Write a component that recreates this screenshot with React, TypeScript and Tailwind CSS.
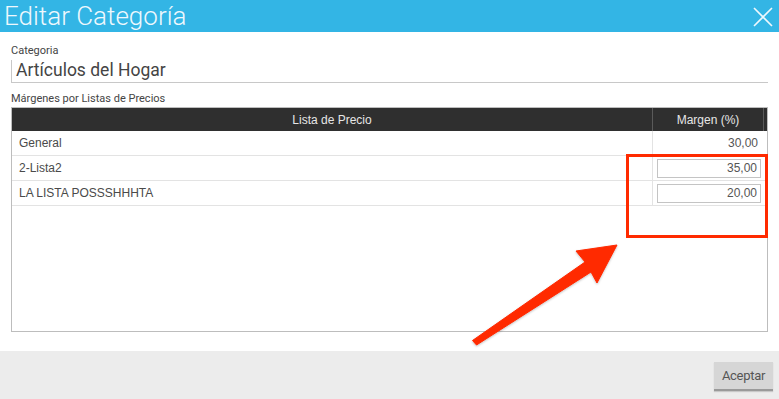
import React from "react";

const rows = [
  { name: "General", value: "30,00", editable: false },
  { name: "2-Lista2", value: "35,00", editable: true },
  { name: "LA LISTA POSSSHHHTA", value: "20,00", editable: true },
];

export default function App() {
  return (
    <div className="relative w-[779px] h-[399px] bg-white flex flex-col overflow-hidden" style={{ fontFamily: "Roboto, 'Liberation Sans', sans-serif" }}>
      <div className="h-[32px] bg-[#33b5e5] flex items-center justify-between pl-[4px] pr-[6px] shrink-0">
        <span className="text-[26px] font-light leading-none text-[#eef8fd]">Editar Categoría</span>
        <svg width="20" height="20" viewBox="0 0 20 20" className="mt-[1px]">
          <path d="M1 1 L19 19 M19 1 L1 19" stroke="#eef8fd" strokeWidth="1.6" fill="none" />
        </svg>
      </div>
      <div className="flex-1 flex flex-col px-[11px] pt-[12px]">
        <div className="text-[11px] leading-[13px] text-[#444]">Categoria</div>
        <div className="mt-[3px] h-[23px] border-l border-b border-[#c8c8c8] flex items-center pl-[4px] text-[17.5px] text-[#444] leading-none">
          Artículos del Hogar
        </div>
        <div className="mt-[9px] text-[11px] leading-[13px] text-[#444]">Márgenes por Listas de Precios</div>
        <div className="mt-[2px] h-[225px] border border-[#bdbdbd] flex flex-col" style={{ fontFamily: "'Liberation Sans', Arial, sans-serif" }}>
          <div className="h-[23px] bg-[#2f2f2f] flex text-[12px] text-[#e6e6e6] shrink-0">
            <div className="w-[641px] flex items-center justify-center border-r border-[#5a5a5a]">Lista de Precio</div>
            <div className="w-[111px] flex items-center justify-center border-r border-[#5a5a5a]">Margen (%)</div>
            <div className="flex-1" />
          </div>
          {rows.map((r) => (
            <div key={r.name} className="h-[25px] flex border-b border-[#e3e3e3] text-[12px] text-[#4a4a4a] shrink-0">
              <div className="w-[641px] flex items-center pl-[7px] border-r border-[#e3e3e3]">{r.name}</div>
              <div className="w-[111px] flex items-center justify-end">
                {r.editable ? (
                  <div className="mr-[3px] w-[104px] h-[19px] border border-[#c4c4c4] flex items-center justify-end pr-[3px] text-[12px] text-[#555]">
                    {r.value}
                  </div>
                ) : (
                  <span className="pr-[6px] text-[#555]">{r.value}</span>
                )}
              </div>
              <div className="flex-1" />
            </div>
          ))}
        </div>
      </div>
      <div className="h-[48px] bg-[#ececec] flex justify-end items-start pt-[11px] pr-[6px] shrink-0">
        <div className="w-[59px] h-[29px] bg-[#d6d6d6] border-b-2 border-[#9a9a9a] shadow-[0_1px_1px_rgba(0,0,0,0.15)] flex items-center justify-center text-[13px] text-[#555] tracking-[-0.3px]">
          Aceptar
        </div>
      </div>
      <div className="absolute left-[626px] top-[154px] w-[142px] h-[84px] border-[3px] border-[#ff2a00]" />
      <svg className="absolute left-0 top-0 pointer-events-none" width="779" height="399" viewBox="0 0 779 399">
        <defs>
          <filter id="sh" x="-10%" y="-10%" width="120%" height="120%">
            <feDropShadow dx="0" dy="1" stdDeviation="1" floodColor="#000" floodOpacity="0.25" />
          </filter>
        </defs>
        <polygon
          points="472.5,340.5 585,262 576,251 617,245 597,283 591,272 476.5,345"
          fill="#ff2a00"
          strokeLinejoin="round"
          stroke="#ff2a00"
          strokeWidth="1"
          filter="url(#sh)"
        />
      </svg>
    </div>
  );
}
